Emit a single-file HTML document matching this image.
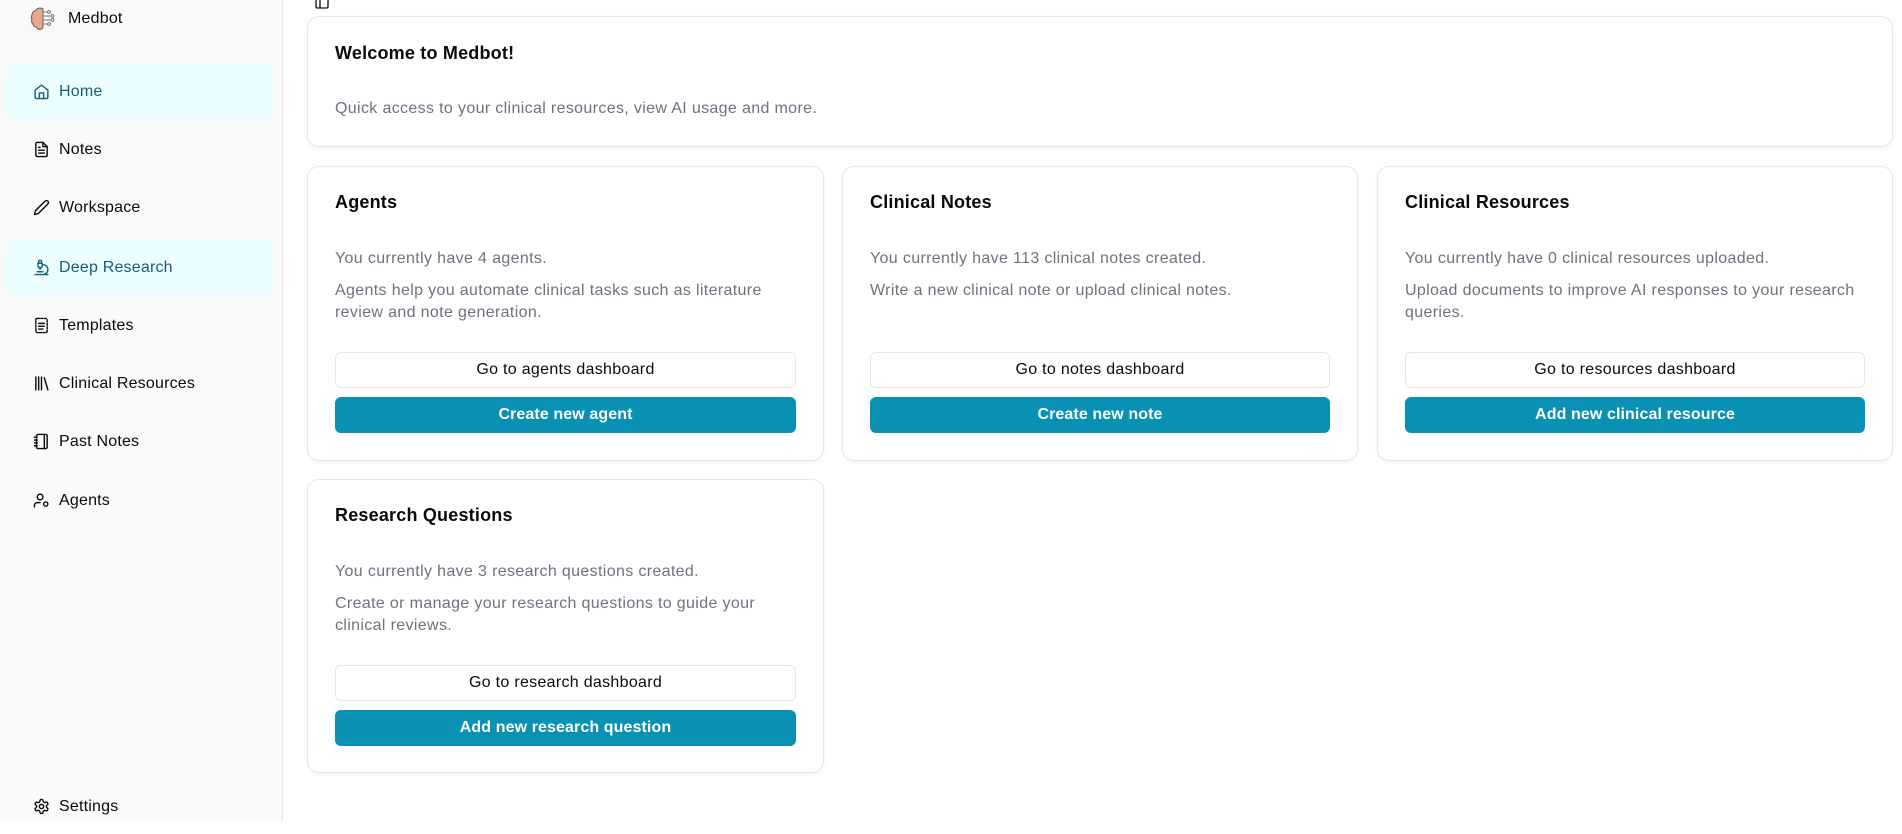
<!DOCTYPE html>
<html><head><meta charset="utf-8"><style>
*{box-sizing:border-box;margin:0;padding:0}
body{width:1902px;height:821px;overflow:hidden;background:#fff;font-family:"Liberation Sans",sans-serif;color:#0a0a0a;position:relative}
.sb{position:absolute;left:0;top:0;width:283px;height:821px;background:#fafafa;border-right:1px solid #e5e7eb}
.logo{position:absolute;left:30px;top:5px;display:flex;align-items:center}
.logo span{font-size:16px;margin-left:10px;letter-spacing:.2px}
.it{position:absolute;left:5px;width:269px;height:55px;border-radius:8px;display:flex;align-items:center;padding-left:28px;font-size:16px;letter-spacing:.2px}
.it.a{background:#ecfeff;color:#155e75}
.it svg{width:17px;height:17px;margin-right:9px;fill:none;stroke:currentColor;stroke-width:2;stroke-linecap:round;stroke-linejoin:round}
.card{position:absolute;background:#fff;border:1px solid #e5e7eb;border-radius:12px;box-shadow:0 1px 3px rgba(0,0,0,.06)}
.t{position:absolute;left:27px;font-size:18px;font-weight:bold;color:#0a0a0a;letter-spacing:.2px}
.p{position:absolute;left:27px;right:27px;font-size:16px;color:#6b7280;line-height:22px;letter-spacing:.35px}
.b1,.b2{position:absolute;left:27px;right:27px;height:36px;border-radius:6px;font-size:16px;display:flex;align-items:center;justify-content:center;letter-spacing:.3px}
.b1{top:185px;border:1px solid #e5e7eb;background:#fff;color:#0a0a0a}
.b2{top:230px;background:#0891b2;color:#fff;font-weight:bold;letter-spacing:.1px}
</style></head><body>
<div class="sb">
 <div class="logo"><svg width="28" height="28" viewBox="0 0 28 28"><path d="M10 3c-3 0-4 2-5 3-2 0-3 2-3 4-1 1-1 3 0 4-1 2 0 4 1 5 0 2 2 3 3 3 1 2 3 3 5 2 1 0 2-1 2-2V4c-1-1-2-1-3-1z" fill="#e8a68a" stroke="#6b5b6b" stroke-width="1"/><path d="M13 7h5M13 11h8M13 15h8M13 19h5" stroke="#6b7280" stroke-width="1"/><circle cx="19" cy="7" r="1.4" fill="#fff" stroke="#6b7280"/><circle cx="22.5" cy="11" r="1.4" fill="#fff" stroke="#6b7280"/><circle cx="22.5" cy="15" r="1.4" fill="#fff" stroke="#6b7280"/><circle cx="19" cy="19" r="1.4" fill="#fff" stroke="#6b7280"/></svg><span>Medbot</span></div>
 <div class="it a" style="top:64px"><svg viewBox="0 0 24 24"><path d="M3 10l9-7 9 7v10a2 2 0 0 1-2 2H5a2 2 0 0 1-2-2z"/><path d="M9 22v-8h6v8"/></svg>Home</div>
 <div class="it" style="top:122px"><svg viewBox="0 0 24 24"><path d="M14 2H6a2 2 0 0 0-2 2v16a2 2 0 0 0 2 2h12a2 2 0 0 0 2-2V8z"/><path d="M14 2v6h6M8 13h8M8 17h8M8 9h2"/></svg>Notes</div>
 <div class="it" style="top:180px"><svg viewBox="0 0 24 24"><path d="M17 3a2.8 2.8 0 0 1 4 4L7.5 20.5 2 22l1.5-5.5z"/></svg>Workspace</div>
 <div class="it a" style="top:240px"><svg viewBox="0 0 24 24"><path d="M6 18h8M3 22h18M14 22a7 7 0 1 0 0-14h-1M9 14h2M9 12a2 2 0 0 1-2-2V6h6v4a2 2 0 0 1-2 2zM12 6V3a1 1 0 0 0-1-1H9a1 1 0 0 0-1 1v3"/></svg>Deep Research</div>
 <div class="it" style="top:298px"><svg viewBox="0 0 24 24" stroke-dasharray="3 2"><rect x="4" y="2" width="16" height="20" rx="2"/><path d="M8 9h8M8 13h8M8 17h6" stroke-dasharray="none"/></svg>Templates</div>
 <div class="it" style="top:356px"><svg viewBox="0 0 24 24"><path d="M4 3v18M8 3v18M12 3v18M16 4l5 17"/></svg>Clinical Resources</div>
 <div class="it" style="top:414px"><svg viewBox="0 0 24 24"><rect x="5" y="2" width="15" height="20" rx="2"/><path d="M2 6h4M2 10h4M2 14h4M2 18h4M16 2v20"/></svg>Past Notes</div>
 <div class="it" style="top:473px"><svg viewBox="0 0 24 24"><circle cx="10" cy="7" r="4"/><path d="M2 21v-2a4 4 0 0 1 4-4h4"/><circle cx="18" cy="17" r="3"/></svg>Agents</div>
 <div class="it" style="top:779px"><svg viewBox="0 0 24 24"><circle cx="12" cy="12" r="3"/><path d="M12.2 2h-.4a2 2 0 0 0-2 2v.2a2 2 0 0 1-1 1.7l-.4.3a2 2 0 0 1-2 0l-.2-.1a2 2 0 0 0-2.7.7l-.2.4a2 2 0 0 0 .7 2.7l.2.1a2 2 0 0 1 1 1.7v.5a2 2 0 0 1-1 1.7l-.2.1a2 2 0 0 0-.7 2.7l.2.4a2 2 0 0 0 2.7.7l.2-.1a2 2 0 0 1 2 0l.4.3a2 2 0 0 1 1 1.7v.2a2 2 0 0 0 2 2h.4a2 2 0 0 0 2-2v-.2a2 2 0 0 1 1-1.7l.4-.3a2 2 0 0 1 2 0l.2.1a2 2 0 0 0 2.7-.7l.2-.4a2 2 0 0 0-.7-2.7l-.2-.1a2 2 0 0 1-1-1.7v-.5a2 2 0 0 1 1-1.7l.2-.1a2 2 0 0 0 .7-2.7l-.2-.4a2 2 0 0 0-2.7-.7l-.2.1a2 2 0 0 1-2 0l-.4-.3a2 2 0 0 1-1-1.7V4a2 2 0 0 0-2-2z"/></svg>Settings</div>
</div>
<svg style="position:absolute;left:314px;top:-6px" width="16" height="16" viewBox="0 0 24 24" fill="none" stroke="#111" stroke-width="2"><rect x="3" y="3" width="18" height="18" rx="2"/><path d="M9 3v18"/></svg>
<div class="card" style="left:307px;top:16px;width:1586px;height:131px">
 <div class="t" style="top:26px">Welcome to Medbot!</div>
 <div class="p" style="top:81px">Quick access to your clinical resources, view AI usage and more.</div>
</div>
<div class="card" style="left:307px;top:166px;width:517px;height:295px">
 <div class="t" style="top:25px">Agents</div>
 <div class="p" style="top:81px">You currently have 4 agents.</div>
 <div class="p" style="top:113px">Agents help you automate clinical tasks such as literature review and note generation.</div>
 <div class="b1">Go to agents dashboard</div><div class="b2">Create new agent</div>
</div>
<div class="card" style="left:842px;top:166px;width:516px;height:295px">
 <div class="t" style="top:25px">Clinical Notes</div>
 <div class="p" style="top:81px">You currently have 113 clinical notes created.</div>
 <div class="p" style="top:113px">Write a new clinical note or upload clinical notes.</div>
 <div class="b1">Go to notes dashboard</div><div class="b2">Create new note</div>
</div>
<div class="card" style="left:1377px;top:166px;width:516px;height:295px">
 <div class="t" style="top:25px">Clinical Resources</div>
 <div class="p" style="top:81px">You currently have 0 clinical resources uploaded.</div>
 <div class="p" style="top:113px">Upload documents to improve AI responses to your research queries.</div>
 <div class="b1">Go to resources dashboard</div><div class="b2">Add new clinical resource</div>
</div>
<div class="card" style="left:307px;top:479px;width:517px;height:294px">
 <div class="t" style="top:25px">Research Questions</div>
 <div class="p" style="top:81px">You currently have 3 research questions created.</div>
 <div class="p" style="top:113px">Create or manage your research questions to guide your clinical reviews.</div>
 <div class="b1">Go to research dashboard</div><div class="b2">Add new research question</div>
</div>
</body></html>
